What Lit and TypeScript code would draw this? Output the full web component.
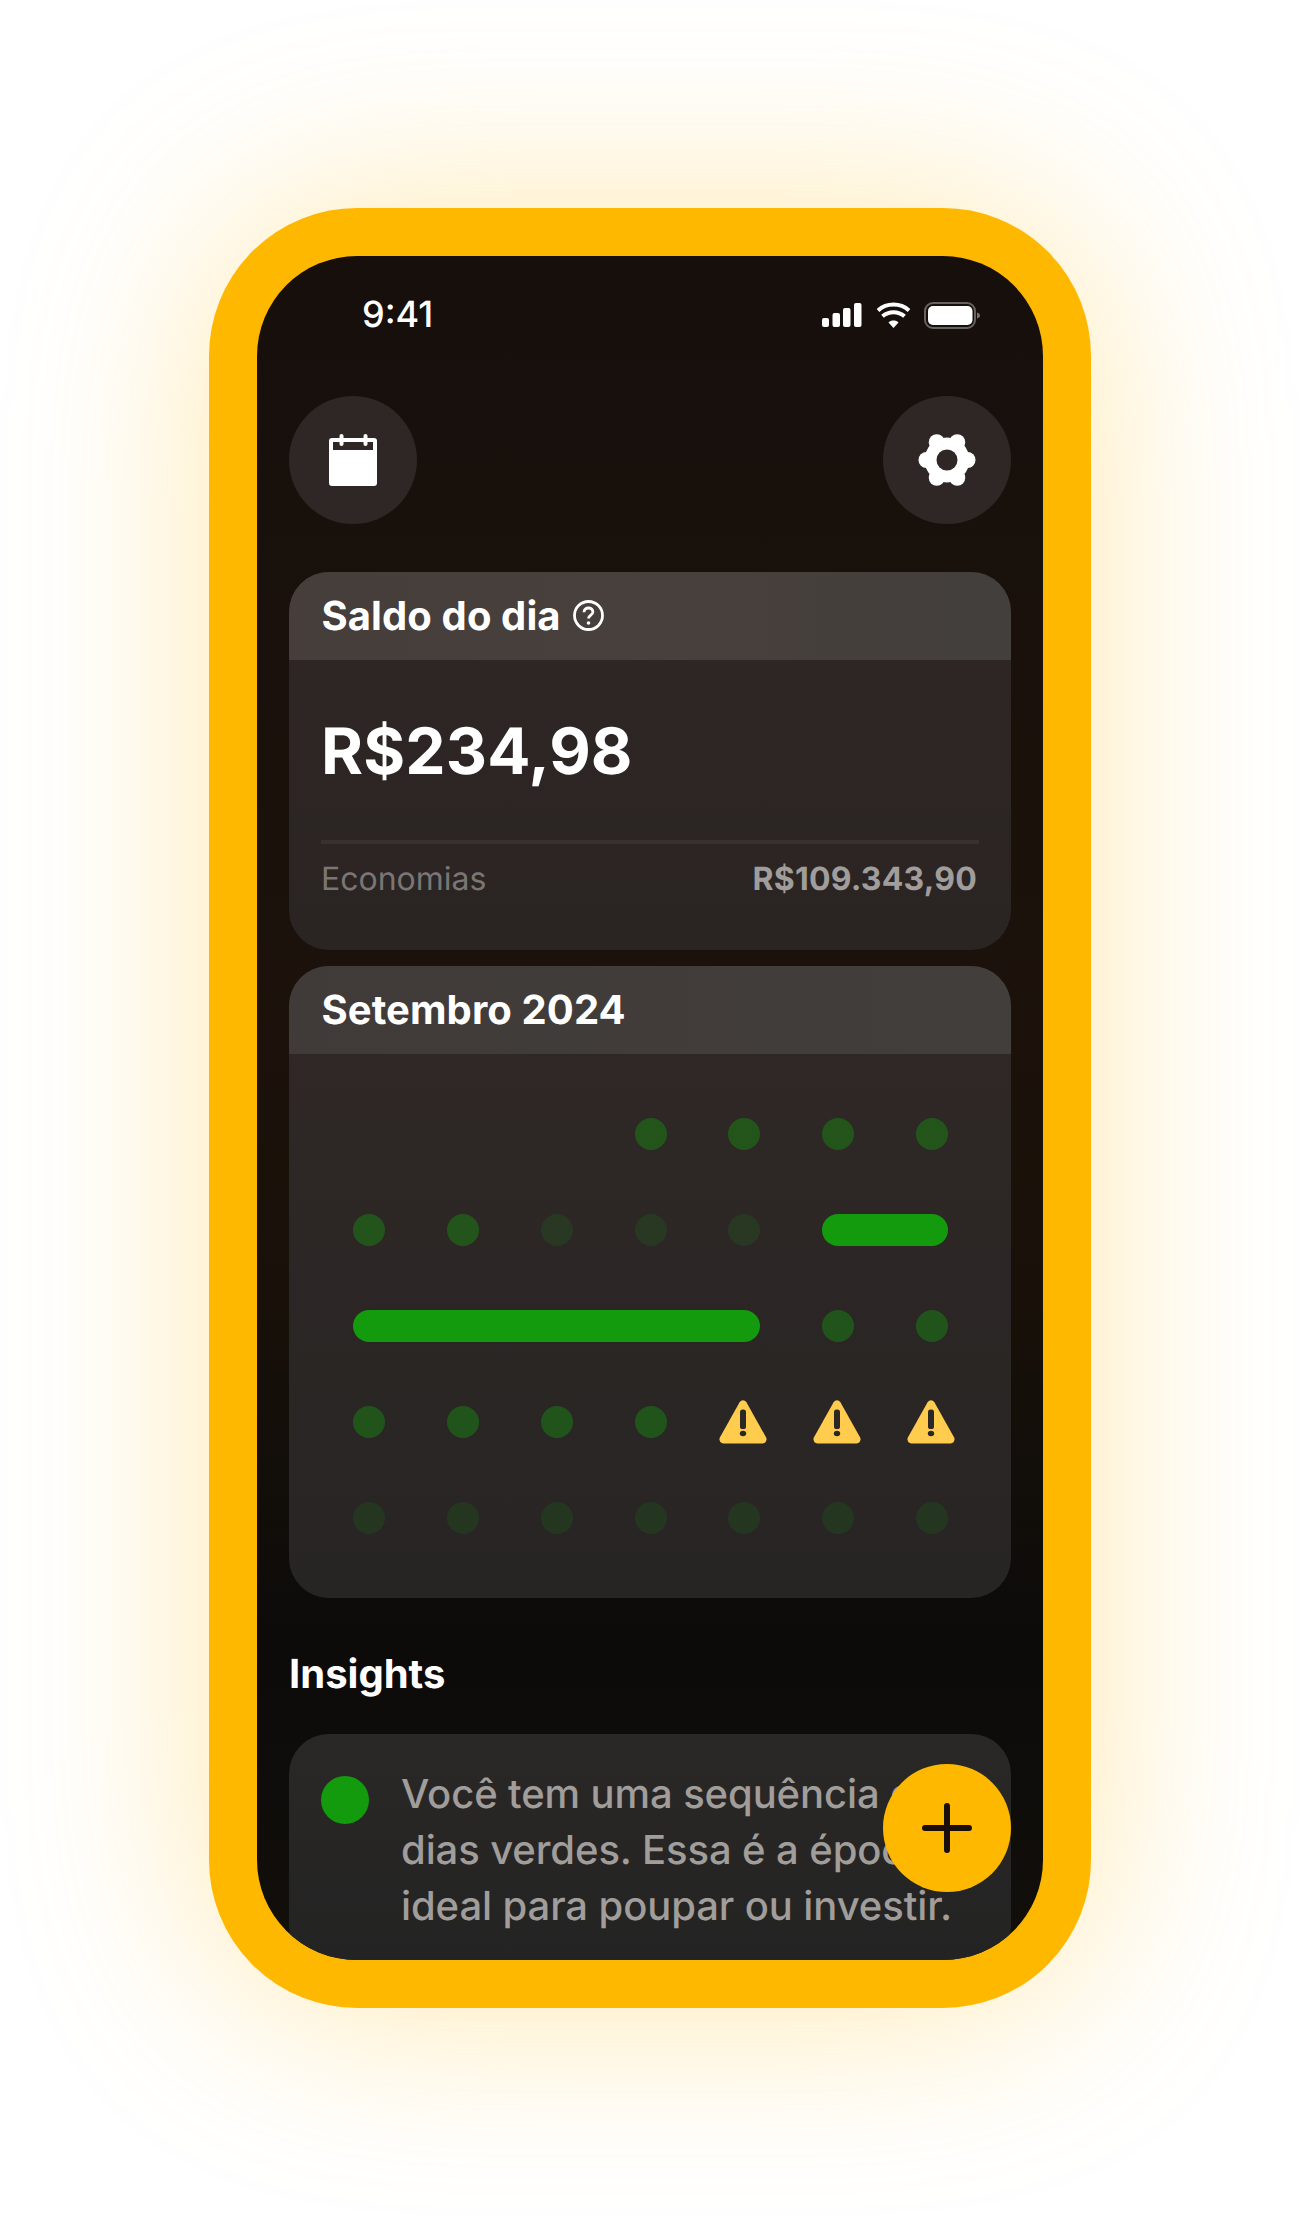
import { LitElement, html, css, svg } from "lit";
import { customElement } from "lit/decorators.js";

const warning = html`<svg class="warn" viewBox="0 0 48 44" aria-hidden="true">
  <path fill="#ffcc4d" d="M20.6 2.2c1.6-2.7 5.2-2.7 6.8 0l19.6 35c1.4 2.7-.2 6.3-3.4 6.3H4.400c-3.200 0-4.800-3.600-3.400-6.300z"/>
  <rect x="21" y="9.500" width="6" height="19.500" rx="2.600" fill="#2b2725"/>
  <ellipse cx="24" cy="33.500" rx="3.200" ry="2.700" fill="#2b2725"/>
</svg>`;

type Cell = { k: "dot" | "bar" | "warn" | "gap"; dim?: boolean; span?: number };
const on: Cell = { k: "dot" };
const off: Cell = { k: "dot", dim: true };
const w: Cell = { k: "warn" };
const g: Cell = { k: "gap" };

const cells: Cell[] = [
  g, g, g, on, on, on, on,
  on, on, off, off, off, { k: "bar", span: 2 },
  { k: "bar", span: 5 }, on, on,
  on, on, on, on, w, w, w,
  off, off, off, off, off, off, off,
];

@customElement("app-root")
export class AppRoot extends LitElement {
  static styles = css`
    :host {
      display: flex;
      height: 2216px;
      align-items: center;
      justify-content: center;
      background: #fff;
      font-family: Inter, "Liberation Sans", sans-serif;
      text-rendering: geometricPrecision;
      color: #fff;
    }
    .phone {
      width: 882px;
      height: 1800px;
      box-sizing: border-box;
      border: 48px solid #ffb800;
      border-radius: 148px;
      box-shadow: 0 0 200px rgba(255, 184, 0, 0.32);
      background: #ffb800;
    }
    .screen {
      position: relative;
      height: 1704px;
      border-radius: 100px;
      overflow: hidden;
      background: linear-gradient(180deg, #160f0b 0%, #1c120b 42%, #191109 60%, #0c0b0a 82%, #120f0b 100%);
      display: flex;
      flex-direction: column;
      padding: 0 32px;
      box-sizing: border-box;
    }
    .status {
      flex: none;
      height: 112px;
      margin: 0 -32px;
      padding: 2px 63px 0 105px;
      display: flex;
      align-items: center;
      justify-content: space-between;
      font-size: 36px;
      font-weight: 500;
    }
    .status-icons {
      display: block;
      width: 158px;
      height: 28px;
      margin-top: 3px;
    }
    .topbar {
      flex: none;
      display: flex;
      justify-content: space-between;
      margin-top: 26px;
      margin-bottom: 48px;
    }
    .round {
      width: 128px;
      height: 128px;
      border-radius: 50%;
      background: #2f2725;
      display: flex;
      align-items: center;
      justify-content: center;
    }
    .round svg {
      display: block;
    }
    .card {
      flex: none;
      border-radius: 40px;
      overflow: hidden;
    }
    .card + .card {
      margin-top: 16px;
    }
    .balance {
      background: linear-gradient(180deg, #2f2725, #2a2423);
    }
    .month {
      background: linear-gradient(180deg, #302826, #272524);
    }
    .head {
      height: 86px;
      padding: 0 32px 2px 32.5px;
      display: flex;
      align-items: center;
      gap: 12px;
      font-size: 40px;
      font-weight: 700;
      letter-spacing: 0.1px;
    }
    .balance .head {
      background: linear-gradient(90deg, #453e3b, #48403d 50%, #433f3c);
    }
    .month .head {
      background: linear-gradient(90deg, #403b39, #423e3b);
    }
    .head svg {
      width: 31px;
      height: 31px;
      display: block;
    }
    .body {
      padding: 50px 32px 50px;
    }
    .amount {
      font-size: 64px;
      line-height: 84px;
      font-weight: 700;
      letter-spacing: 0.15px;
      margin: 0 0 46px;
    }
    .rule {
      height: 4px;
      background: rgba(255, 255, 255, 0.06);
    }
    .row {
      padding: 15px 2px 1px 0;
      display: flex;
      justify-content: space-between;
      font-size: 32px;
      line-height: 40px;
      color: #7a7674;
    }
    .row b {
      font-weight: 700;
      letter-spacing: 0.2px;
      color: #a09d9b;
    }
    .grid {
      display: grid;
      grid-template-columns: repeat(7, 93.75px);
      grid-auto-rows: 32px;
      row-gap: 64px;
      padding: 64px 0 64px 33.4px;
      justify-items: center;
      align-items: center;
    }
    .dot {
      width: 32px;
      height: 32px;
      border-radius: 50%;
      background: rgba(19, 154, 13, 0.4);
    }
    .dot.dim {
      background: rgba(19, 154, 13, 0.15);
    }
    .bar {
      height: 32px;
      border-radius: 16px;
      background: #139a0d;
      justify-self: stretch;
      margin: 0 30.9px;
    }
    .warn {
      width: 48px;
      height: 44px;
      margin-right: 2px;
      display: block;
    }
    h2 {
      flex: none;
      margin: 52px 0 36px;
      font-size: 40px;
      line-height: 48px;
      font-weight: 700;
    }
    .insight {
      flex: none;
      display: flex;
      gap: 32px;
      align-items: flex-start;
      padding: 32px;
      background: linear-gradient(180deg, #2a2826, #232323);
    }
    .insight i {
      flex: none;
      width: 48px;
      height: 48px;
      margin-top: 10px;
      border-radius: 50%;
      background: #139a0d;
    }
    .insight p {
      margin: 0;
      font-size: 40px;
      line-height: 56px;
      font-weight: 500;
      letter-spacing: -0.1px;
      color: #a09d9b;
    }
    .fab {
      position: absolute;
      right: 32px;
      bottom: 68px;
      width: 128px;
      height: 128px;
      border-radius: 50%;
      background: #ffb800;
      display: flex;
      align-items: center;
      justify-content: center;
    }
  `;

  render() {
    return html`<div class="phone">
      <div class="screen">
        <div class="status">
          <span>9:41</span>
          <svg class="status-icons" viewBox="0 0 158 28" aria-hidden="true">
            ${svg`<g fill="#fff">
              <rect x="0" y="16" width="7" height="9" rx="2"/>
              <rect x="10.500" y="11" width="7.500" height="14" rx="2"/>
              <rect x="21" y="6" width="7.500" height="19" rx="2"/>
              <rect x="32" y="1" width="7.500" height="24" rx="2"/>
              <path d="M71.500 26l-5-5.600c2.900-2.400 7.100-2.400 10 0z"/>
            </g>
            <g fill="none" stroke="#fff" stroke-width="4">
              <path d="M60.500 14.200c6.300-5.400 15.700-5.400 22 0"/>
              <path d="M56 8.400c8.800-7.800 22.200-7.800 31 0"/>
            </g>
            <rect x="103" y="1" width="50" height="25" rx="8" fill="none" stroke="#fff" stroke-opacity=".35" stroke-width="2"/>
            <rect x="106" y="4" width="44.500" height="19" rx="5" fill="#fff"/>
            <path d="M155 10.500c2 .5 3 1.500 3 3s-1 2.500-3 3z" fill="#fff" fill-opacity=".4"/>`}
          </svg>
        </div>

        <div class="topbar">
          <div class="round">
            <svg width="48" height="52" viewBox="0 0 48 52" aria-hidden="true">
              <path fill="#fff" d="M3 4h42a3 3 0 0 1 3 3v42a3 3 0 0 1-3 3H3a3 3 0 0 1-3-3V7a3 3 0 0 1 3-3z"/>
              <rect x="4" y="8" width="40" height="8" fill="#2f2725"/>
              <rect x="10.500" y="0" width="4" height="12" rx="2" fill="#fff"/>
              <rect x="34.500" y="0" width="4" height="12" rx="2" fill="#fff"/>
            </svg>
          </div>
          <div class="round">
            <svg width="58" height="54" viewBox="-29 -27 58 54" aria-hidden="true">
              <g fill="#fff">
                <circle r="22.500"/>
                <circle cx="20.500" r="8"/>
                <circle cx="-20.500" r="8"/>
                <circle cx="10.250" cy="17.750" r="8"/>
                <circle cx="-10.250" cy="17.750" r="8"/>
                <circle cx="10.250" cy="-17.750" r="8"/>
                <circle cx="-10.250" cy="-17.750" r="8"/>
              </g>
              <circle r="10.500" fill="#2f2725"/>
            </svg>
          </div>
        </div>

        <section class="card balance">
          <div class="head">
            <span>Saldo do dia</span>
            <svg viewBox="0 0 31 31" aria-hidden="true">
              <circle cx="15.500" cy="15.500" r="14" fill="none" stroke="#fff" stroke-width="2.800"/>
              <path d="M11 12.200c0-2.600 2-4.200 4.500-4.200s4.400 1.600 4.400 3.900c0 3.300-4.400 3.100-4.400 6.500" fill="none" stroke="#fff" stroke-width="2.800"/>
              <circle cx="15.500" cy="23" r="1.800" fill="#fff"/>
            </svg>
          </div>
          <div class="body">
            <div class="amount">R$234,98</div>
            <div class="rule"></div>
            <div class="row"><span>Economias</span><b>R$109.343,90</b></div>
          </div>
        </section>

        <section class="card month">
          <div class="head"><span>Setembro 2024</span></div>
          <div class="grid">
            ${cells.map((c) => {
              if (c.k === "gap") return html`<span></span>`;
              if (c.k === "warn") return warning;
              if (c.k === "bar")
                return html`<div class="bar" style="grid-column: span ${c.span}"></div>`;
              return html`<div class="dot ${c.dim ? "dim" : ""}"></div>`;
            })}
          </div>
        </section>

        <h2>Insights</h2>
        <section class="card insight">
          <i></i>
          <p>Você tem uma sequência de dias verdes. Essa é a época ideal para poupar ou investir.</p>
        </section>

        <div class="fab">
          <svg width="52" height="52" viewBox="0 0 52 52" aria-hidden="true">
            <path d="M26 4v44M4 26h44" stroke="#1a0f08" stroke-width="6" stroke-linecap="round"/>
          </svg>
        </div>
      </div>
    </div>`;
  }
}
